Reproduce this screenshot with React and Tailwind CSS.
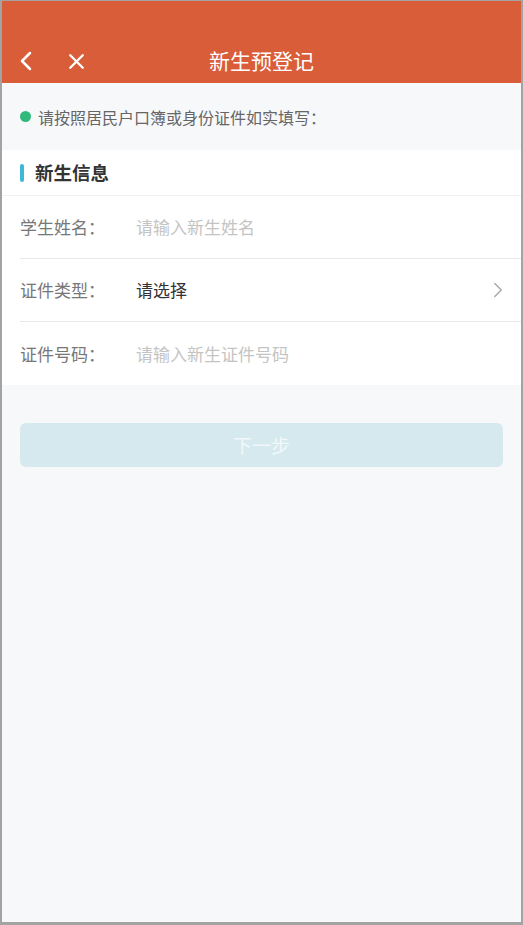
import { ChevronLeft, ChevronRight, X } from 'lucide-react'

const font = { fontFamily: '"Noto Sans CJK SC", "Noto Sans", sans-serif' }

const rows = [
  { label: '学生姓名', value: '请输入新生姓名', placeholder: true },
  { label: '证件类型', value: '请选择', placeholder: false, arrow: true },
  { label: '证件号码', value: '请输入新生证件号码', placeholder: true },
]

function App() {
  return (
    <div
      className="h-[925px] w-[523px] border-l-2 border-r-2 border-t border-b-[3px] border-[#a3a3a3] bg-[#f7f8fa] flex flex-col overflow-hidden"
      style={font}
    >
      {/* header */}
      <div className="h-[82px] bg-[#d95d38] flex items-end pb-[2px] relative">
        <div className="flex items-center h-[40px] pl-[8px] gap-[22px] text-white">
          <ChevronLeft size={32} strokeWidth={1.9} />
          <X size={25} strokeWidth={2.3} />
        </div>
        <div className="absolute left-0 right-0 bottom-[2px] h-[40px] flex items-center justify-center text-white text-[21px]">
          新生预登记
        </div>
      </div>

      {/* notice */}
      <div className="h-[67px] flex items-center pl-[18px] gap-[7px]">
        <span className="w-[11px] h-[11px] rounded-full bg-[#2fba7c]"></span>
        <span className="text-[16px] text-[#666666]">请按照居民户口簿或身份证件如实填写：</span>
      </div>

      {/* card */}
      <div className="bg-white">
        <div className="h-[46px] flex items-center pl-[18px] gap-[11px] border-b border-[#f0f0f0]">
          <span className="w-[4px] h-[18px] rounded-full bg-[#3fb8d6]"></span>
          <span className="text-[18.5px] font-bold text-[#333333]">新生信息</span>
        </div>
        <div className="pl-[18px]">
          {rows.map((r, i) => (
            <div
              key={i}
              className={`h-[63px] flex items-center pr-[10px] ${i < rows.length - 1 ? 'border-b border-[#e8e8e8]' : ''}`}
            >
              <span className="w-[116px] text-[17px] text-[#777777]">{r.label}：</span>
              <span className={`flex-1 text-[17px] ${r.placeholder ? 'text-[#c4c4c4]' : 'text-[#333333]'}`}>{r.value}</span>
              {r.arrow && <ChevronRight size={26} strokeWidth={1.4} className="text-[#aaaaaa]" />}
            </div>
          ))}
        </div>
      </div>

      {/* button */}
      <div className="px-[18px] pt-[38px]">
        <div className="h-[44px] rounded-[6px] bg-[#d5e9ef] flex items-center justify-center text-[19px] text-[#f2f8fa]">
          下一步
        </div>
      </div>
    </div>
  )
}

export default App
